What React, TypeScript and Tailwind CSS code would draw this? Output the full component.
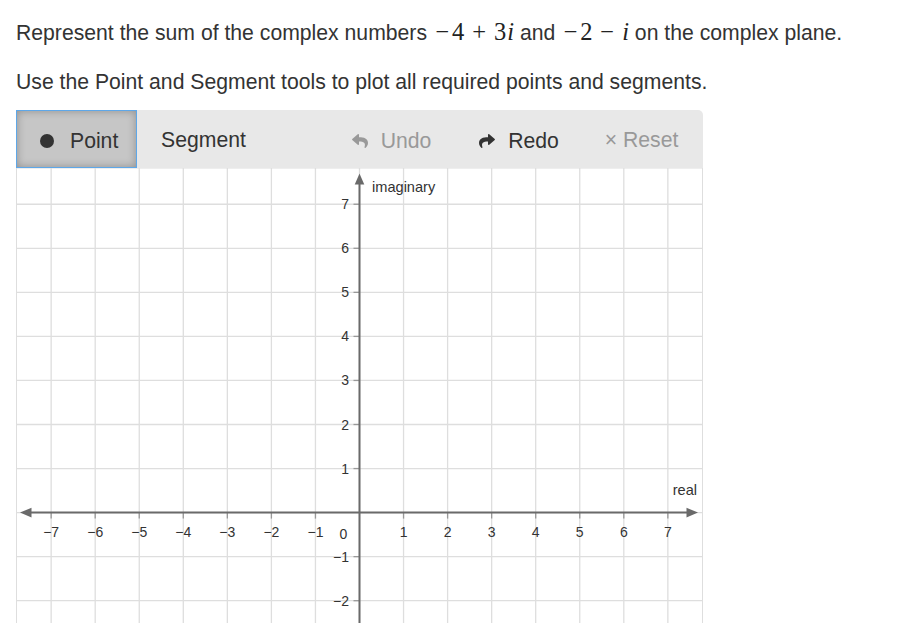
import { FaReply, FaShare } from "react-icons/fa";

const UNIT = 44.05;
const OX = 343.5;
const OY = 344.6;
const WIDTH = 687;
const HEIGHT = 455;
const STEPS = [-7, -6, -5, -4, -3, -2, -1, 1, 2, 3, 4, 5, 6, 7];
const Y_STEPS = STEPS.filter((k) => OY - k * UNIT < HEIGHT - 8);

const label = (n: number) => (n < 0 ? `\u2212${Math.abs(n)}` : `${n}`);

function Op({ children }: { children: string }) {
  return <span className="inline-block w-[19px] text-center">{children}</span>;
}

function Math1() {
  return (
    <span className="inline-block font-['Liberation_Serif',serif] text-[24.5px] leading-none text-[#222]">
      <Op>−</Op>4<span className="mx-[5.4px]"><Op>+</Op></span>3<i className="ml-[1px]">i</i>
    </span>
  );
}

function Math2() {
  return (
    <span className="inline-block font-['Liberation_Serif',serif] text-[24.5px] leading-none text-[#222]">
      <Op>−</Op>2<span className="mx-[5.4px]"><Op>−</Op></span><i>i</i>
    </span>
  );
}

function Graph() {
  const grid = "#dedede";
  const axis = "#6a6a6a";
  return (
    <svg width={WIDTH} height={HEIGHT} className="block" fontFamily="'Liberation Sans', Arial, sans-serif">
      <rect x={0.5} y={0} width={WIDTH - 1} height={HEIGHT + 2} fill="#fff" stroke={grid} />
      {STEPS.concat([0]).map((k) => (
        <line key={`v${k}`} x1={OX + k * UNIT} x2={OX + k * UNIT} y1={0} y2={HEIGHT} stroke={grid} strokeWidth={1.3} />
      ))}
      {STEPS.concat([0]).map((k) => (
        <line key={`h${k}`} y1={OY - k * UNIT} y2={OY - k * UNIT} x1={0} x2={WIDTH} stroke={grid} strokeWidth={1.3} />
      ))}

      {/* ticks */}
      {STEPS.map((k) => (
        <line key={`tx${k}`} x1={OX + k * UNIT} x2={OX + k * UNIT} y1={OY} y2={OY + 6} stroke="#999" strokeWidth={1.3} />
      ))}
      {STEPS.map((k) => (
        <line key={`ty${k}`} x1={OX - 6} x2={OX} y1={OY - k * UNIT} y2={OY - k * UNIT} stroke="#999" strokeWidth={1.3} />
      ))}

      {/* axes */}
      <line x1={12} x2={674} y1={OY} y2={OY} stroke={axis} strokeWidth={2} />
      <polygon points={`4,${OY} 15.5,${OY - 4.8} 15.5,${OY + 4.8}`} fill={axis} />
      <polygon points={`682,${OY} 670.5,${OY - 4.8} 670.5,${OY + 4.8}`} fill={axis} />
      <line x1={OX} x2={OX} y1={14} y2={HEIGHT} stroke={axis} strokeWidth={2} />
      <polygon points={`${OX},5.5 ${OX - 4.8},16.5 ${OX + 4.8},16.5`} fill={axis} />

      {/* tick labels */}
      {STEPS.map((k) => (
        <text key={`lx${k}`} x={OX + k * UNIT} y={OY + 24} fontSize={14} fill="#333" textAnchor="middle">
          {label(k)}
        </text>
      ))}
      <text x={OX - 16} y={OY + 26} fontSize={14} fill="#333" textAnchor="middle">
        0
      </text>
      {Y_STEPS.map((k) => (
        <text key={`ly${k}`} x={OX - 10.5} y={OY - k * UNIT + 5} fontSize={14} fill="#333" textAnchor="end">
          {label(k)}
        </text>
      ))}

      <text x={OX + 12.5} y={24} fontSize={14.6} fill="#333">
        imaginary
      </text>
      <text x={681} y={OY - 17.5} fontSize={14.6} fill="#333" textAnchor="end">
        real
      </text>
    </svg>
  );
}

export default function App() {
  return (
    <div className="h-screen overflow-hidden bg-white px-4 pt-[18px] font-['Liberation_Sans',Arial,sans-serif] text-[21.2px] text-[#333]">
      <p className="leading-[30px]">
        Represent the sum of the complex numbers <Math1 /> and <Math2 /> on the complex plane.
      </p>
      <p className="mt-[19px] leading-[30px]">Use the Point and Segment tools to plot all required points and segments.</p>

      <div className="mt-[13px] w-[687px]">
        <div className="flex h-[58px] items-stretch rounded-tr-[5px] bg-[#e8e8e8]">
          <button className="flex w-[121px] items-center gap-[16px] border border-[#5ea7e8] bg-[#c6c6c6] pl-[23px] pt-[3px] text-[#333] shadow-[inset_0_0_9px_rgba(0,0,0,0.28)]">
            <span className="h-[14px] w-[14px] shrink-0 rounded-full bg-[#333]" />
            <span>Point</span>
          </button>
          <button className="flex w-[133px] items-center justify-center pt-[1px] text-[#333]">Segment</button>
          <div className="w-[55px]" />
          <button className="flex w-[132px] items-center justify-center gap-[12px] pt-[3px] text-[#999]">
            <FaReply className="h-[16px] w-[18px]" />
            <span>Undo</span>
          </button>
          <button className="flex w-[123px] items-center justify-center gap-[12px] pt-[3px] text-[#333]">
            <FaShare className="h-[16px] w-[18px]" />
            <span>Redo</span>
          </button>
          <button className="flex w-[123px] items-center justify-center pt-[1px] text-[#999]">× Reset</button>
        </div>
        <Graph />
      </div>
    </div>
  );
}
